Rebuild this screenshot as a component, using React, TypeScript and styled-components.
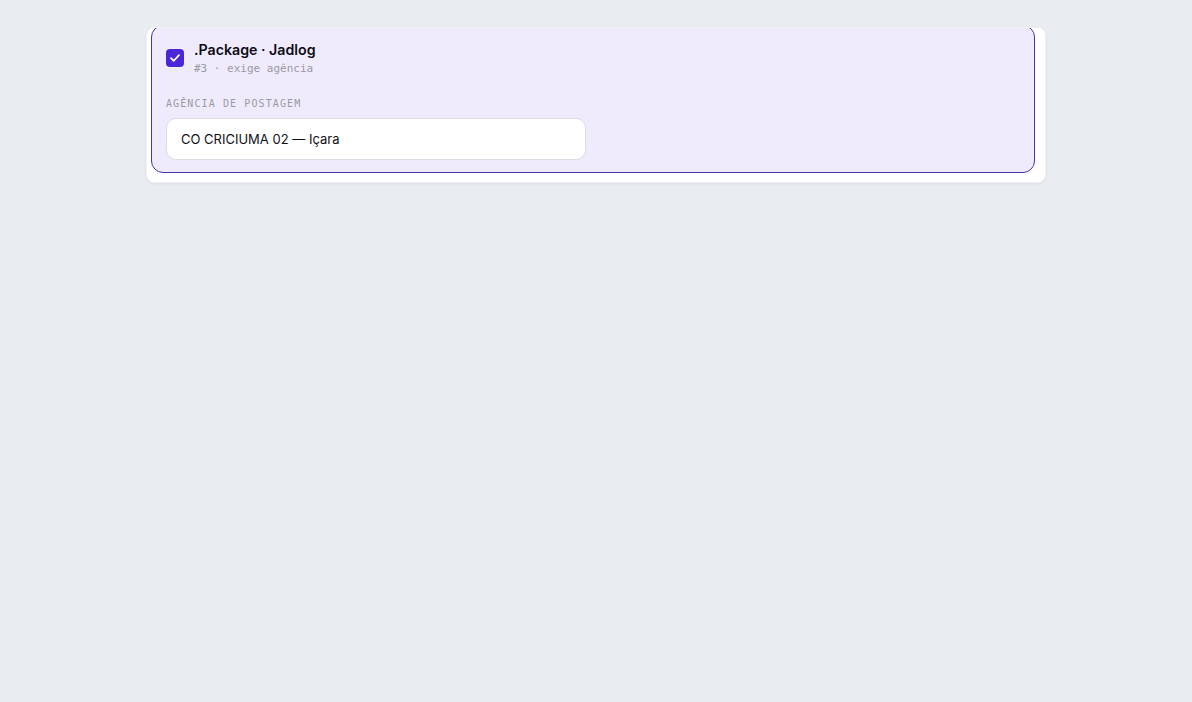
import React from "react";
import styled, { createGlobalStyle } from "styled-components";

const Global = createGlobalStyle`
  html, body { margin: 0; padding: 0; background: #e9ecf0; }
  body { font-family: "Inter", "Noto Sans", sans-serif; }
  * { box-sizing: border-box; }
`;

const Page = styled.div`
  min-height: 702px;
  display: flex;
  justify-content: center;
  align-items: flex-start;
  padding-top: 27px;
`;

const Panel = styled.div`
  width: 900px;
  background: #ffffff;
  border: 1px solid #eef0f4;
  border-radius: 8px;
  overflow: hidden;
  padding: 0 10px 9px 4px;
  box-shadow: 0 1px 3px rgba(20, 30, 60, 0.06);
`;

const Carrier = styled.div<{ $selected?: boolean }>`
  margin-top: -3px;
  border: 1px solid ${(p) => (p.$selected ? "#4a32ad" : "#dcdce4")};
  background: ${(p) => (p.$selected ? "#f0ebfc" : "#ffffff")};
  border-radius: 12px;
  padding: 13px 14px 12px;
  display: flex;
  flex-direction: column;
  gap: 20px;
`;

const Header = styled.div`
  display: flex;
  align-items: center;
  gap: 10px;
`;

const Check = styled.span`
  width: 18px;
  height: 18px;
  border-radius: 4px;
  background: #4b25d8;
  display: flex;
  align-items: center;
  justify-content: center;
  flex-shrink: 0;
`;

const Titles = styled.div`
  display: flex;
  flex-direction: column;
`;

const Title = styled.div`
  font-size: 14.2px;
  line-height: 22px;
  font-weight: 600;
  color: #0d0d14;
`;

const Sub = styled.div`
  font-family: "DejaVu Sans Mono", "Liberation Mono", monospace;
  font-size: 11px;
  line-height: 16px;
  color: #9a9aa2;
`;

const Field = styled.div`
  display: flex;
  flex-direction: column;
  gap: 7px;
`;

const Label = styled.div`
  font-family: "DejaVu Sans Mono", "Liberation Mono", monospace;
  font-size: 10px;
  line-height: 14px;
  letter-spacing: 1.1px;
  color: #9a9aa2;
  text-transform: uppercase;
`;

const Input = styled.div`
  width: 420px;
  height: 42px;
  background: #ffffff;
  border: 1px solid #dcdce4;
  border-radius: 10px;
  padding: 0 14px;
  display: flex;
  align-items: center;
  font-size: 13px;
  color: #111118;
`;

export default function App() {
  return (
    <>
      <Global />
      <Page>
        <Panel>
          <Carrier $selected>
            <Header>
              <Check>
                <svg width="10" height="8" viewBox="0 0 10 8" fill="none">
                  <path d="M1 4.2L3.7 6.8L9 1.2" stroke="#fff" strokeWidth="1.7" strokeLinecap="round" strokeLinejoin="round" />
                </svg>
              </Check>
              <Titles>
                <Title>.Package · Jadlog</Title>
                <Sub>#3 · exige agência</Sub>
              </Titles>
            </Header>
            <Field>
              <Label>Agência de postagem</Label>
              <Input>CO CRICIUMA 02 — Içara</Input>
            </Field>
          </Carrier>
        </Panel>
      </Page>
    </>
  );
}
